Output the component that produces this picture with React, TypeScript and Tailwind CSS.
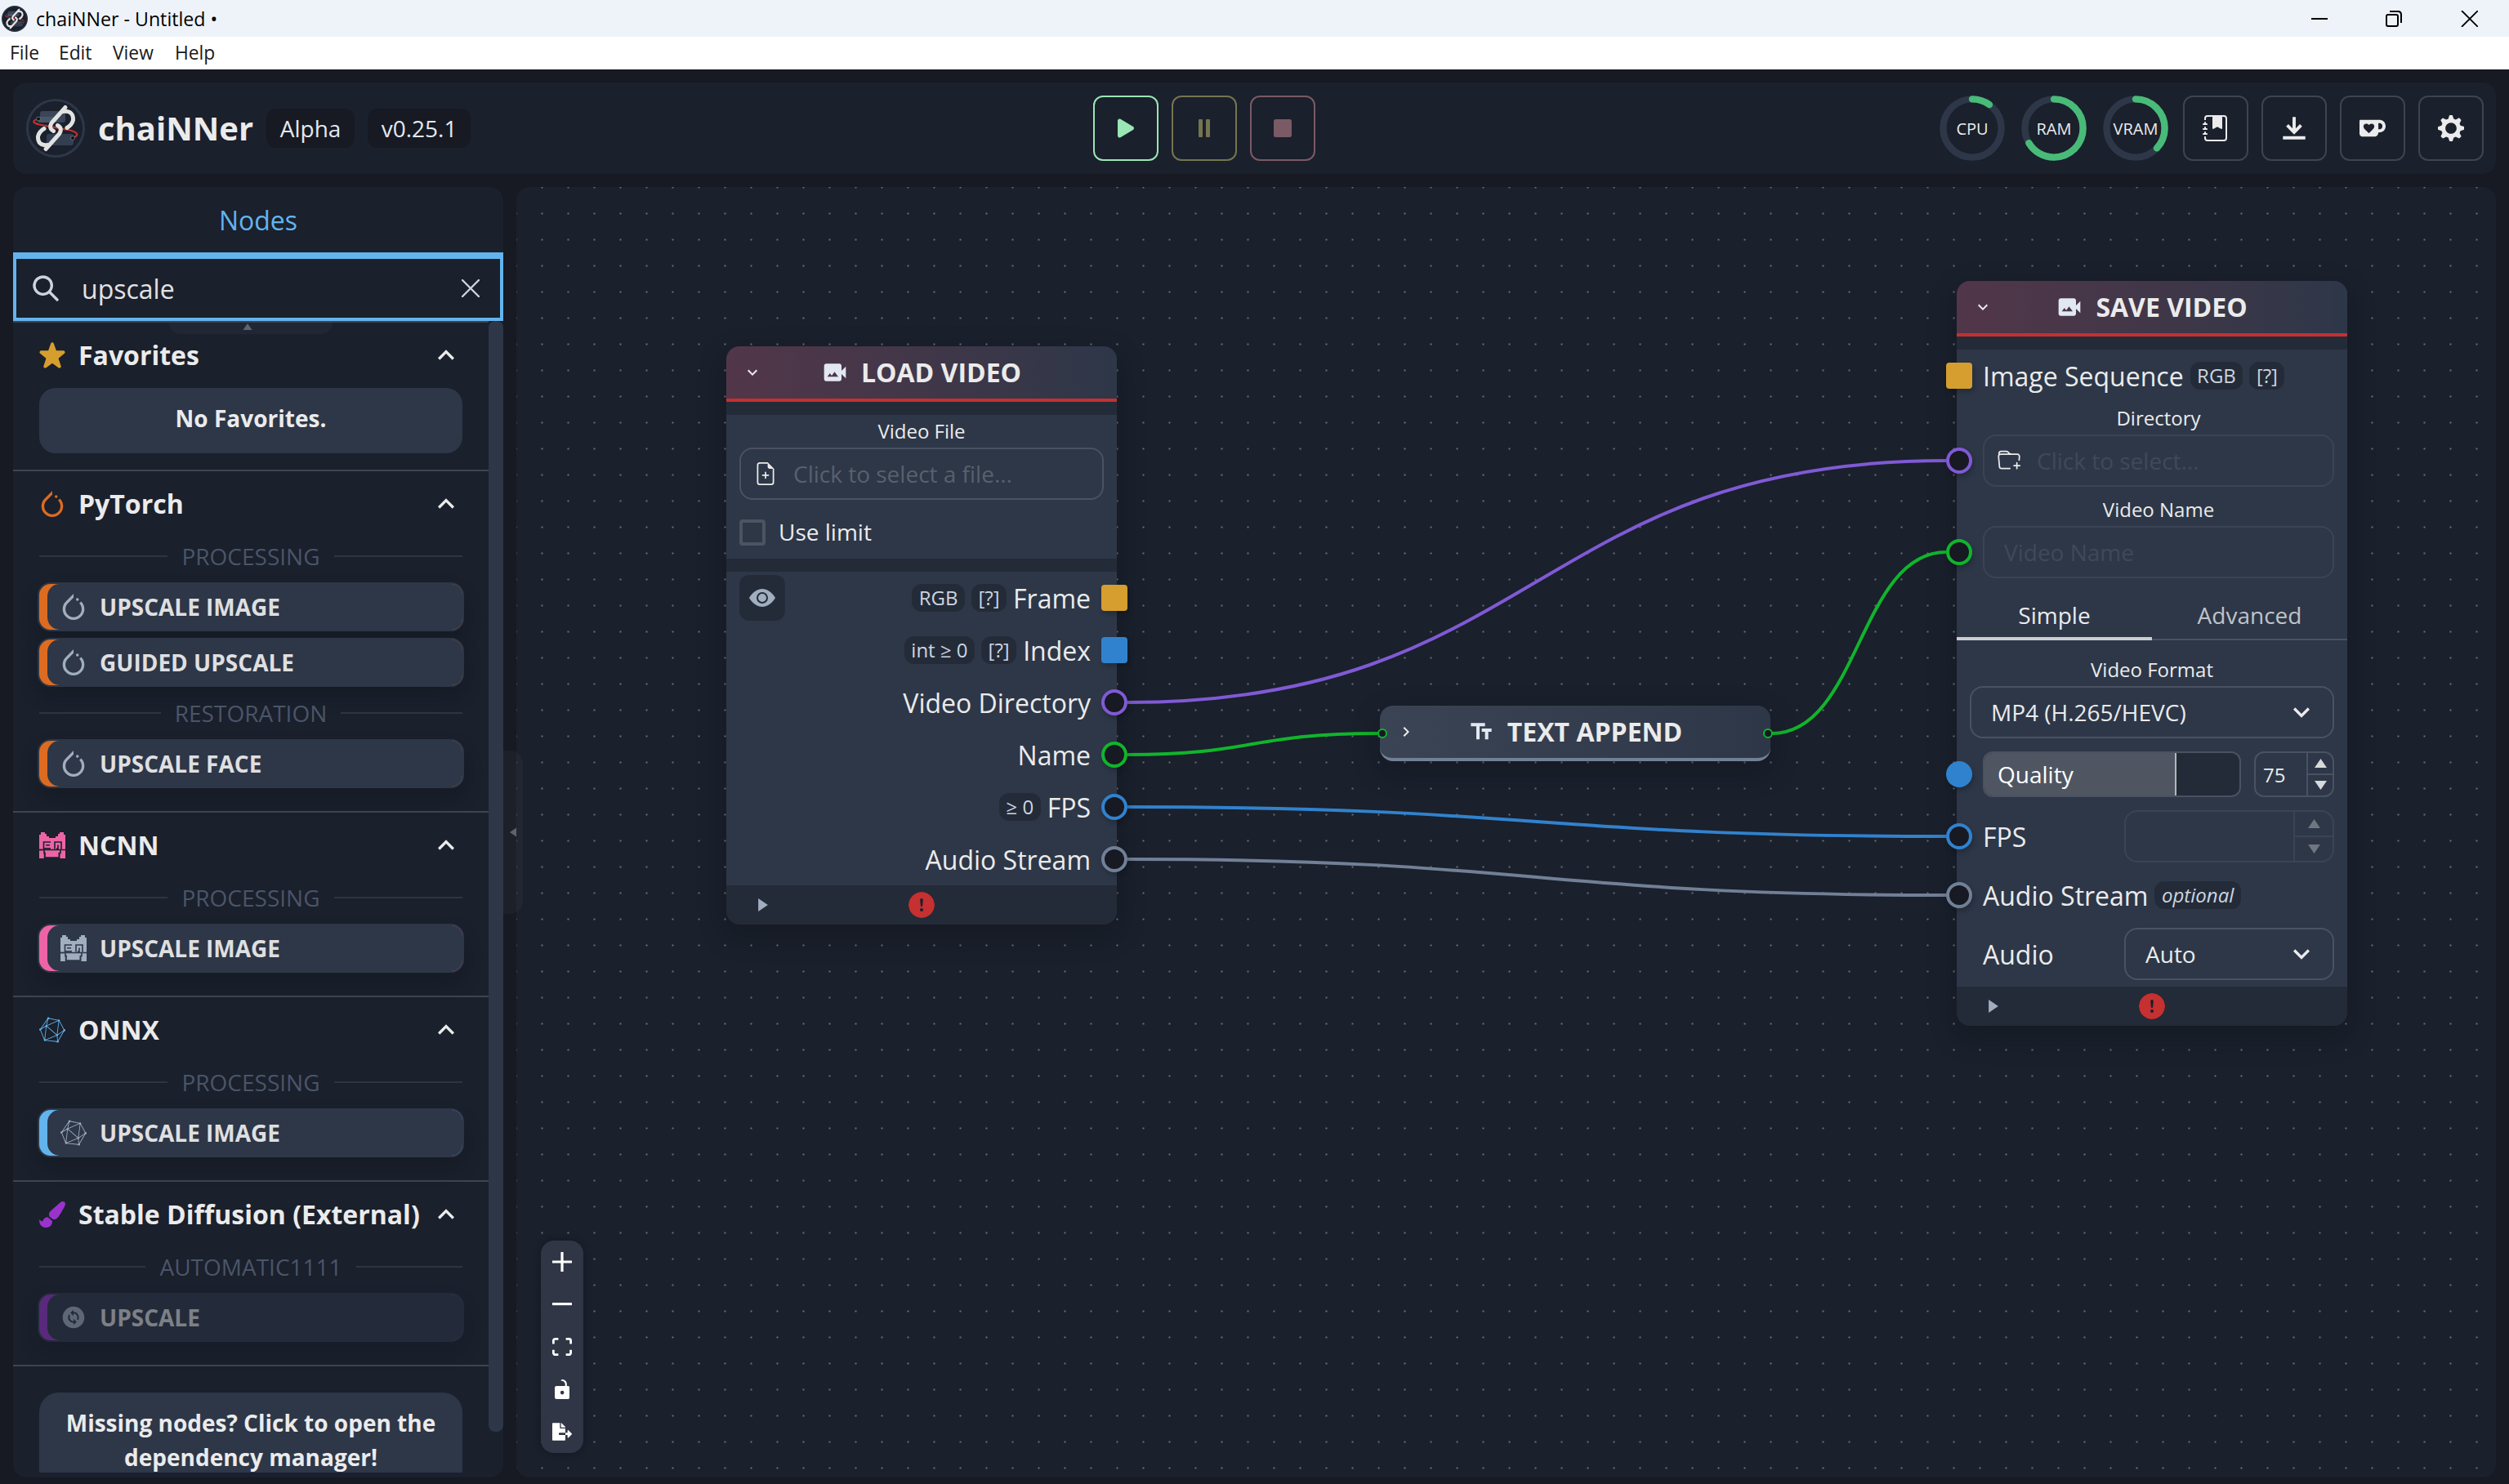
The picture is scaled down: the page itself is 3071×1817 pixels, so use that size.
import React from "react";
import {
  BsExclamationCircleFill,
  BsEyeFill,
  BsFileEarmarkPlus,
  BsFolderPlus,
  BsJournalBookmarkFill,
} from "react-icons/bs";
import { FaFileExport, FaPaintBrush } from "react-icons/fa";
import { IoPause, IoPlay, IoStop } from "react-icons/io5";
import { MdChangeCircle, MdVideoCameraBack } from "react-icons/md";
import { SiKofi, SiOnnx, SiPytorch } from "react-icons/si";

interface NodeItem {
  name: string;
  icon: React.ReactNode;
}

interface Group {
  label: string;
  items: NodeItem[];
}

interface Category {
  title: string;
  icon: React.ReactNode;
  accent: string;
  disabled?: boolean;
  groups: Group[];
}

const Logo = ({ className }: { className?: string }) => (
  <svg viewBox="0 0 72 72" className={className} fill="none">
    <circle cx="36" cy="36" r="34.5" fill="#1a202c" stroke="#2d3748" strokeWidth="3" />
    <rect x="17" y="15" width="31" height="14" rx="3" fill="#3a4558" />
    <rect x="14" y="22" width="24" height="7" rx="3" fill="#4a5568" />
    <rect x="25" y="43" width="33" height="14" rx="3" fill="#333e50" />
    <path d="M15 24.5Q3 28 16 31.500L54 38.500Q69 43 57 48" stroke="#c53030" strokeWidth="2.200" />
    <circle cx="15" cy="24.500" r="2.500" fill="#111" stroke="#718096" strokeWidth="0.800" />
    <circle cx="57" cy="48" r="2.500" fill="#111" stroke="#718096" strokeWidth="0.800" />
    <g stroke="#e2e2e2" strokeWidth="5" strokeLinecap="round">
      <path d="M48 10.500L31.500 29Q27 36 33.500 39.500" />
      <path d="M45 15.500Q58 14 57.500 26Q56 32 50 35.500" />
      <path d="M24 61.500L40.500 43Q45 36 38.500 32.500" />
      <path d="M27 56.500Q14 58 14.500 46Q16 40 22 36.500" />
    </g>
  </svg>
);

const NcnnIcon = ({ cut }: { cut: string }) => (
  <svg viewBox="0 0 32 32" className="size-8">
    <path
      fill="currentColor"
      d="M0 3h2V0h5v2h2v3h3v2h8V5h3V2h2V0h5v3h2v29h-7H0z"
    />
    <path
      stroke={cut}
      strokeWidth="1.6"
      fill="none"
      d="M14 12H5.500v9.500H0M14 19.800H5.500M13 15.800H8M19 20.500V12h8v9.500H5M23 15.500v4.500h-2M6 21v4.500h2M26 21v4.500h-2"
    />
    <path fill={cut} d="M5.800 25h2v7h-2zM23.500 25h2v7h-2zM5.800 30.200h19V32h-19zM0 20.700h4v1.600H0zM28 20.700h4v1.600h-4z" />
  </svg>
);

const Star = () => (
  <svg viewBox="0 0 24 24" className="size-8 text-[#d69e2e]">
    <path
      fill="currentColor"
      d="M23.555,8.729a1.505,1.505,0,0,0-1.406-.98H16.062a.5.5,0,0,1-.472-.334L13.405,1.222a1.5,1.5,0,0,0-2.81,0l-.005.016L8.41,7.415a.5.5,0,0,1-.471.334H1.85A1.5,1.5,0,0,0,.887,10.4l5.184,4.3a.5.5,0,0,1,.155.543L4.048,21.774a1.5,1.5,0,0,0,2.31,1.684l5.346-3.92a.5.5,0,0,1,.591,0l5.344,3.919a1.5,1.5,0,0,0,2.312-1.683l-2.178-6.535a.5.5,0,0,1,.155-.543l5.194-4.306A1.5,1.5,0,0,0,23.555,8.729Z"
    />
  </svg>
);

const Chevron = ({ className }: { className: string }) => (
  <svg viewBox="0 0 24 24" className={className}>
    <path fill="currentColor" d="M16.59 8.59L12 13.17 7.41 8.59 6 10l6 6 6-6z" />
  </svg>
);

const Triangle = ({ className }: { className: string }) => (
  <svg viewBox="0 0 15 11" className={className}>
    <path fill="currentColor" d="M7.500 0L15 11H0z" />
  </svg>
);

const categories: Category[] = [
  {
    title: "PyTorch",
    icon: <SiPytorch className="size-8 text-[#dd6b20]" />,
    accent: "bg-[#dd6b20]",
    groups: [
      {
        label: "PROCESSING",
        items: [
          { name: "UPSCALE IMAGE", icon: <SiPytorch className="size-8" /> },
          { name: "GUIDED UPSCALE", icon: <SiPytorch className="size-8" /> },
        ],
      },
      {
        label: "RESTORATION",
        items: [{ name: "UPSCALE FACE", icon: <SiPytorch className="size-8" /> }],
      },
    ],
  },
  {
    title: "NCNN",
    icon: (
      <span className="text-[#ed64a6]">
        <NcnnIcon cut="#1a202c" />
      </span>
    ),
    accent: "bg-[#ed64a6]",
    groups: [
      { label: "PROCESSING", items: [{ name: "UPSCALE IMAGE", icon: <NcnnIcon cut="#2d3748" /> }] },
    ],
  },
  {
    title: "ONNX",
    icon: <SiOnnx className="size-8 text-[#63b3ed]" />,
    accent: "bg-[#63b3ed]",
    groups: [
      { label: "PROCESSING", items: [{ name: "UPSCALE IMAGE", icon: <SiOnnx className="size-8" /> }] },
    ],
  },
  {
    title: "Stable Diffusion (External)",
    icon: <FaPaintBrush className="size-8 text-[#9933cc]" />,
    accent: "bg-[#9933cc]",
    disabled: true,
    groups: [
      { label: "AUTOMATIC1111", items: [{ name: "UPSCALE", icon: <MdChangeCircle className="size-8" /> }] },
    ],
  },
];

const TitleBar = () => (
  <>
    <div className="flex h-[45px] items-center bg-[#eef3f9] pl-[2px] text-black">
      <Logo className="size-8" />
      <span className="ml-[10px] pt-[2px] text-[23.200px] leading-none">chaiNNer - Untitled •</span>
      <svg viewBox="0 0 204 20" className="mr-[38px] ml-auto h-5 w-[204px]" fill="none" stroke="#000" strokeWidth="2">
        <path d="M0 10h20" />
        <rect x="92" y="5" width="14" height="14" rx="2" />
        <path d="M96 1h10q4 0 4 4v10" />
        <path d="M184 0l20 20M204 0l-20 20" strokeWidth="1.800" />
      </svg>
    </div>
    <div className="flex h-10 items-center bg-white text-[22.800px] leading-none text-[#1a1a1a]">
      <span className="w-[60px] pl-[12px]">File</span>
      <span className="w-[66px] pl-[12px]">Edit</span>
      <span className="w-[76px] pl-[12px]">View</span>
      <span className="pl-[12px]">Help</span>
    </div>
  </>
);

const Meter = ({ label, value }: { label: string; value: number }) => (
  <div className="grid size-20 place-items-center">
    <svg viewBox="0 0 100 100" className="col-start-1 row-start-1 size-20 -rotate-90" fill="none" strokeWidth="10.500">
      <circle cx="50" cy="50" r="44.500" stroke="#2d3748" />
      <circle
        cx="50"
        cy="50"
        r="44.500"
        stroke="#48bb78"
        strokeLinecap="round"
        pathLength="100"
        strokeDasharray={`${value} 100`}
      />
    </svg>
    <span className="col-start-1 row-start-1 pt-px text-[20px] leading-none text-[#ebebeb]">{label}</span>
  </div>
);

const HeaderButton = ({ children }: { children: React.ReactNode }) => (
  <button className="flex size-20 items-center justify-center rounded-xl border-2 border-[#3f444e] text-[#ebebeb]">
    {children}
  </button>
);

const Header = () => (
  <header className="flex h-28 items-center rounded-2xl bg-[#1a202c] pr-[15px] pl-4">
    <div className="flex w-[1306px] items-center gap-4">
      <Logo className="size-[72px]" />
      <h1 className="text-[40px] leading-none font-bold text-[#ebebeb]">chaiNNer</h1>
      <span className="flex h-12 w-[108px] items-center justify-center rounded-xl bg-[#171923] pb-px text-[28px] leading-none text-[#e2e8f0]">
        Alpha
      </span>
      <span className="flex h-12 w-[126px] items-center justify-center rounded-xl bg-[#171923] pb-px text-[28px] leading-none text-[#e2e8f0]">
        v0.25.1
      </span>
    </div>
    <div className="flex gap-4">
      <button className="flex size-20 items-center justify-center rounded-xl border-2 border-[#9ae6b4] text-[#9ae6b4]">
        <IoPlay className="size-8" />
      </button>
      <button className="flex size-20 items-center justify-center rounded-xl border-2 border-[#757550] text-[#757550]">
        <IoPause className="size-8" />
      </button>
      <button className="flex size-20 items-center justify-center rounded-xl border-2 border-[#7a5a64] text-[#7a5a64]">
        <IoStop className="size-8" />
      </button>
    </div>
    <div className="ml-auto flex items-center gap-4">
      <div className="mr-[2px] flex gap-5">
        <Meter label="CPU" value={10} />
        <Meter label="RAM" value={66.5} />
        <Meter label="VRAM" value={37} />
      </div>
      <HeaderButton>
        <BsJournalBookmarkFill className="size-8" />
      </HeaderButton>
      <HeaderButton>
        <svg viewBox="0 0 14 14" className="size-8">
          <path
            fill="currentColor"
            d="M11.2857,6.05714 L10.08571,4.85714 L7.85714,7.14786 L7.85714,1 L6.14286,1 L6.14286,7.14786 L3.91429,4.85714 L2.71429,6.05714 L7,10.42857 L11.2857,6.05714 Z M1,11.2857 L1,13 L13,13 L13,11.2857 L1,11.2857 Z"
          />
        </svg>
      </HeaderButton>
      <HeaderButton>
        <SiKofi className="size-8" />
      </HeaderButton>
      <HeaderButton>
        <svg viewBox="0 0 14 14" className="size-8">
          <path
            fill="currentColor"
            fillRule="evenodd"
            d="M14,7.77 L14,6.17 L12.06,5.53 L11.61,4.44 L12.49,2.6 L11.36,1.47 L9.55,2.38 L8.46,1.93 L7.77,0 L6.17,0 L5.54,1.94 L4.43,2.39 L2.59,1.51 L1.46,2.64 L2.37,4.45 L1.92,5.54 L0,6.23 L0,7.82 L1.94,8.46 L2.39,9.55 L1.51,11.39 L2.64,12.52 L4.45,11.61 L5.54,12.06 L6.23,14 L7.82,14 L8.46,12.06 L9.55,11.61 L11.39,12.49 L12.52,11.36 L11.61,9.55 L12.07,8.46 L14,7.77 Z M7,10 C5.34,10 4,8.66 4,7 C4,5.34 5.34,4 7,4 C8.66,4 10,5.34 10,7 C10,8.66 8.66,10 7,10 Z"
          />
        </svg>
      </HeaderButton>
    </div>
  </header>
);

const SectionTitle = ({ icon, title }: { icon: React.ReactNode; title: string }) => (
  <div className="flex h-20 items-center">
    {icon}
    <span className="ml-4 text-[32px] leading-none font-bold whitespace-nowrap text-[#ebebeb]">{title}</span>
    <Chevron className="ml-auto size-10 shrink-0 rotate-180 text-[#ebebeb]" />
  </div>
);

const NodeButton = ({ item, accent, disabled }: { item: NodeItem; accent: string; disabled?: boolean }) => (
  <div
    className={`-mx-[2px] mb-2 h-[60px] rounded-2xl border-2 border-[#2d3748] shadow-[0_12px_24px_rgba(0,0,0,0.16)] ${accent} ${
      disabled ? "opacity-50" : ""
    }`}
  >
    <div className="ml-[10px] flex h-full items-center rounded-l-[15px] rounded-r-[14px] bg-[#2d3748] pl-4 text-[#a0aec0]">
      {item.icon}
      <span className="ml-4 text-[28px] leading-none font-bold text-[#dfdfe0]">{item.name}</span>
    </div>
  </div>
);

const Sidebar = () => (
  <aside className="flex w-[600px] shrink-0 flex-col overflow-hidden rounded-2xl bg-[#1a202c] pb-[6px]">
    <div className="flex h-[84px] shrink-0 items-center justify-center border-b-4 border-[#63b3ed] pt-px text-[32px] leading-none text-[#63b3ed]">
      Nodes
    </div>
    <div className="flex h-20 shrink-0 items-center border-4 border-[#63b3ed] pr-[25px] pl-[20px]">
      <svg viewBox="0 0 24 24" className="size-8 text-[#cbd5e0]">
        <path
          fill="currentColor"
          d="M23.384,21.619,16.855,15.09a9.284,9.284,0,1,0-1.768,1.768l6.529,6.529a1.266,1.266,0,0,0,1.768,0A1.251,1.251,0,0,0,23.384,21.619ZM2.75,9.5a6.75,6.75,0,1,1,6.75,6.75A6.758,6.758,0,0,1,2.75,9.5Z"
        />
      </svg>
      <span className="ml-[28px] pt-[2px] text-[32px] leading-none text-[#e2e2e3]">upscale</span>
      <svg viewBox="0 0 22 22" className="ml-auto size-[22px]" stroke="#cbd5e0" strokeWidth="2.400" strokeLinecap="round">
        <path d="M1 1l20 20M21 1L1 21" />
      </svg>
    </div>
    <div className="relative flex min-h-0 flex-1 overflow-hidden">
      <div className="w-[582px] border-t-2 border-[#3f444e]">
        <section className="h-[182px] border-b-2 border-[#3f444e] px-8">
          <SectionTitle icon={<Star />} title="Favorites" />
          <div className="h-20 rounded-[20px] bg-[#2d3748] pt-4 text-center text-[28px] leading-[42px] font-bold text-[#ebebeb]">
            No Favorites.
          </div>
        </section>
        {categories.map((category) => (
          <section key={category.title} className="border-b-2 border-[#3f444e] px-8 pb-5">
            <SectionTitle icon={category.icon} title={category.title} />
            {category.groups.map((group) => (
              <div key={group.label}>
                <div className="mb-2 flex h-12 items-center gap-[17px]">
                  <hr className="flex-1 border-t-2 border-[#2f3540]" />
                  <span className="text-[28px] leading-none text-[#4a5568]">{group.label}</span>
                  <hr className="flex-1 border-t-2 border-[#2f3540]" />
                </div>
                {group.items.map((item) => (
                  <NodeButton key={item.name} item={item} accent={category.accent} disabled={category.disabled} />
                ))}
              </div>
            ))}
          </section>
        ))}
        <div className="mx-8 mt-8 h-[120px] rounded-3xl bg-[#2d3748] px-4 pt-4 text-center text-[28px] leading-[42px] font-bold text-[#ebebeb]">
          Missing nodes? Click to open the dependency manager!
        </div>
      </div>
      <div className="h-[1360px] w-[18px] rounded-lg bg-[#2d3748]" />
      <div className="absolute top-[2px] left-[191px] flex h-[14px] w-[200px] justify-center rounded-b-2xl bg-[#202633]">
        <Triangle className="mt-px ml-[-9px] h-[8px] w-[12px] text-[#5f646d]" />
      </div>
    </div>
  </aside>
);

const handleColors = {
  purple: "border-[#805ad5]",
  green: "border-[#10b52c]",
  blue: "border-[#3182ce]",
  gray: "border-[#718096]",
};

type HandleKind = keyof typeof handleColors | "imageList" | "numberList" | "number";

const Handle = ({ kind, side }: { kind: HandleKind; side: string }) => {
  const base = `absolute top-1/2 size-8 -translate-y-1/2 shadow-[2px_4px_6px_rgba(0,0,0,0.2)] ${side}`;
  if (kind === "imageList") return <div className={`${base} rounded-[4px] bg-[#d69e2e]`} />;
  if (kind === "numberList") return <div className={`${base} rounded-[4px] bg-[#3182ce]`} />;
  if (kind === "number") return <div className={`${base} rounded-full bg-[#3182ce]`} />;
  return <div className={`${base} rounded-full border-4 bg-[#171923] ${handleColors[kind]}`} />;
};

const Tag = ({ children, italic }: { children: React.ReactNode; italic?: boolean }) => (
  <span
    className={`flex h-[34px] items-center rounded-xl bg-[#242b38] px-[8.500px] text-[24px] leading-none text-[#cbd5e0] ${
      italic ? "italic" : ""
    }`}
  >
    {children}
  </span>
);

const NodeHeader = ({ title }: { title: string }) => (
  <div className="flex h-[68px] items-center rounded-t-2xl border-b-4 border-[#c53030] bg-linear-to-r from-[#523649] to-[#2d3748]">
    <Chevron className="-mr-[44px] ml-[20px] size-6 text-[#ebebeb]" />
    <div className="flex flex-1 items-center justify-center gap-4">
      <MdVideoCameraBack className="size-8 text-[#e2e8f0]" />
      <span className="text-[32px] leading-none font-bold text-[#ebebeb]">{title}</span>
    </div>
  </div>
);

const NodeFooter = () => (
  <div className="flex h-12 items-center rounded-b-2xl bg-[#242b38]">
    <Triangle className="-mr-[53px] ml-[37px] h-[12px] w-[16px] rotate-90 text-[#a0aec0]" />
    <div className="flex flex-1 justify-center">
      <BsExclamationCircleFill className="size-8 rounded-full bg-[#1a202c] text-[#c53030]" />
    </div>
  </div>
);

const outputs: { label: string; kind: HandleKind; tags: string[] }[] = [
  { label: "Frame", kind: "imageList", tags: ["RGB", "[?]"] },
  { label: "Index", kind: "numberList", tags: ["int ≥ 0", "[?]"] },
  { label: "Video Directory", kind: "purple", tags: [] },
  { label: "Name", kind: "green", tags: [] },
  { label: "FPS", kind: "blue", tags: ["≥ 0"] },
  { label: "Audio Stream", kind: "gray", tags: [] },
];

const LoadVideoNode = () => (
  <div className="absolute top-[195px] left-[257px] w-[478px] rounded-2xl shadow-[0_12px_36px_rgba(0,0,0,0.22)]">
    <NodeHeader title="LOAD VIDEO" />
    <div className="h-4 bg-[#242b38]" />
    <div className="h-[176px] bg-[#2d3748] px-4">
      <div className="flex h-10 items-center justify-center text-[24px] leading-none text-[#ebebeb]">Video File</div>
      <div className="flex h-16 items-center rounded-2xl border-2 border-[#4a5261] pl-[16px]">
        <BsFileEarmarkPlus className="size-7 text-[#ebebeb]" />
        <span className="ml-[20px] text-[28px] leading-none text-[#59606c]">Click to select a file...</span>
      </div>
      <div className="mt-2 flex h-16 items-center">
        <div className="size-8 rounded-[4px] border-4 border-[#4b5460]" />
        <span className="ml-4 pb-[2px] text-[28px] leading-none text-[#ebebeb]">Use limit</span>
      </div>
    </div>
    <div className="h-4 bg-[#242b38]" />
    <div className="bg-[#2d3748]">
      {outputs.map((output, i) => (
        <div key={output.label} className="relative flex h-16 items-center justify-end gap-2 pr-8 pl-4">
          {i === 0 && (
            <div className="mr-auto flex size-14 items-center justify-center rounded-xl bg-[#242b38]">
              <BsEyeFill className="size-8 text-[#a0aec0]" />
            </div>
          )}
          {output.tags.map((tag) => (
            <Tag key={tag}>{tag}</Tag>
          ))}
          <span className="pt-px text-[32px] leading-none text-[#ebebeb]">{output.label}</span>
          <Handle kind={output.kind} side="-right-[13px]" />
        </div>
      ))}
    </div>
    <NodeFooter />
  </div>
);

const TextAppendNode = () => (
  <div className="absolute top-[635px] left-[1057px] w-[478px]">
    <div className="flex h-[68px] items-center rounded-2xl border-b-4 border-[#718096] bg-linear-to-r from-[#3b4455] to-[#2d3748] shadow-[0_12px_36px_rgba(0,0,0,0.22)]">
      <Chevron className="-mr-[44px] ml-[20px] size-6 -rotate-90 text-[#ebebeb]" />
      <div className="flex flex-1 items-center justify-center gap-4">
        <svg viewBox="0 0 24 24" className="size-8 text-[#e2e8f0]">
          <path fill="currentColor" d="M2.500 4v3h5v12h3V7h5V4h-13zm19 5h-9v3h3v7h3v-7h3V9z" />
        </svg>
        <span className="text-[32px] leading-none font-bold text-[#ebebeb]">TEXT APPEND</span>
      </div>
    </div>
    <div className="absolute top-[28px] -left-[3px] size-3 rounded-full border-2 border-[#10b52c] bg-[#171923]" />
    <div className="absolute top-[28px] -right-[3px] size-3 rounded-full border-2 border-[#10b52c] bg-[#171923]" />
  </div>
);

const SaveVideoNode = () => (
  <div className="absolute top-[115px] left-[1763px] w-[478px] rounded-2xl text-[#ebebeb] shadow-[0_12px_36px_rgba(0,0,0,0.22)]">
    <NodeHeader title="SAVE VIDEO" />
    <div className="h-4 bg-[#242b38]" />
    <div className="bg-[#2d3748] pb-2">
      <div className="relative flex h-16 items-center gap-2 pl-8">
        <Handle kind="imageList" side="-left-[13px]" />
        <span className="pt-px text-[32px] leading-none">Image Sequence</span>
        <Tag>RGB</Tag>
        <Tag>[?]</Tag>
      </div>

      <div className="pr-4 pl-8">
        <div className="flex h-10 items-center justify-center text-[24px] leading-none">Directory</div>
      </div>
      <div className="relative pr-4 pl-8">
        <Handle kind="purple" side="-left-[13px]" />
        <div className="flex h-16 items-center rounded-2xl border-2 border-[#3b4454] pl-[16px]">
          <BsFolderPlus className="size-7" />
          <span className="ml-[20px] text-[28px] leading-none text-[#404959]">Click to select...</span>
        </div>
      </div>
      <div className="mt-2 flex h-10 items-center justify-center pr-4 pl-8 text-[24px] leading-none">Video Name</div>
      <div className="relative pr-4 pl-8">
        <Handle kind="green" side="-left-[13px]" />
        <div className="flex h-16 items-center rounded-2xl border-2 border-[#3b4454] pl-6 text-[28px] leading-none text-[#404959]">
          Video Name
        </div>
      </div>

      <div className="mt-3 flex h-16 text-[28px] leading-none">
        <div className="flex flex-1 items-center justify-center border-b-4 border-[#cbcdd1] pt-[6px]">Simple</div>
        <div className="flex flex-1 items-center justify-center border-b-2 border-[#4a5261] pt-1 text-[#c0c3c8]">
          Advanced
        </div>
      </div>

      <div className="mt-4 px-4">
        <div className="flex h-10 items-center justify-center text-[24px] leading-none">Video Format</div>
        <div className="flex h-16 items-center justify-between rounded-2xl border-2 border-[#4a5261] pr-[18px] pl-6 text-[28px] leading-none">
          MP4 (H.265/HEVC)
          <Chevron className="size-10" />
        </div>
      </div>

      <div className="relative mt-4 flex h-14 gap-4 pr-4 pl-8">
        <Handle kind="number" side="-left-[13px]" />
        <div className="flex w-[316px] overflow-hidden rounded-xl border-2 border-[#4a5261] bg-[#242b38]">
          <div className="flex w-[235px] items-center border-r-2 border-[#b3b6bb] bg-[#4f5662] pl-4 text-[28px] leading-none text-white">
            Quality
          </div>
        </div>
        <div className="flex flex-1 items-center rounded-xl border-2 border-[#4a5261] text-[24px] leading-none">
          <span className="flex-1 pt-px pl-[9px]">75</span>
          <div className="flex h-full w-8 flex-col border-l-2 border-[#4a5261] text-[#d8d9db]">
            <div className="flex flex-1 items-center justify-center border-b-2 border-[#4a5261]">
              <Triangle className="h-[11px] w-[15px]" />
            </div>
            <div className="flex flex-1 items-center justify-center">
              <Triangle className="h-[11px] w-[15px] rotate-180" />
            </div>
          </div>
        </div>
      </div>

      <div className="relative mt-4 flex h-16 items-center justify-between pr-4 pl-8">
        <Handle kind="blue" side="-left-[13px]" />
        <span className="pt-px text-[32px] leading-none">FPS</span>
        <div className="flex h-16 w-[257px] justify-end rounded-2xl border-2 border-[#3b4454]">
          <div className="flex w-12 flex-col border-l-2 border-[#3b4454] text-[#70757f]">
            <div className="flex flex-1 items-center justify-center border-b-2 border-[#3b4454]">
              <Triangle className="h-[11px] w-[15px]" />
            </div>
            <div className="flex flex-1 items-center justify-center">
              <Triangle className="h-[11px] w-[15px] rotate-180" />
            </div>
          </div>
        </div>
      </div>

      <div className="relative mt-2 flex h-16 items-center gap-2 pl-8">
        <Handle kind="gray" side="-left-[13px]" />
        <span className="pt-px text-[32px] leading-none">Audio Stream</span>
        <Tag italic>optional</Tag>
      </div>

      <div className="mt-2 flex h-16 items-center justify-between pr-4 pl-8">
        <span className="pt-px text-[32px] leading-none">Audio</span>
        <div className="flex h-16 w-[257px] items-center justify-between rounded-2xl border-2 border-[#4a5261] pr-[18px] pl-6 text-[28px] leading-none">
          Auto
          <Chevron className="size-10" />
        </div>
      </div>
    </div>
    <NodeFooter />
  </div>
);

// Connections between handles, in window coordinates
const edges = [
  { from: [1380, 860], to: [2382, 564], color: "#805ad5" },
  { from: [1380, 924], to: [1686, 898], color: "#10b52c" },
  { from: [2169, 898], to: [2382, 676], color: "#10b52c" },
  { from: [1380, 988], to: [2382, 1024], color: "#3182ce" },
  { from: [1380, 1052], to: [2382, 1096], color: "#718096" },
];

const Edges = () => (
  <svg viewBox="632 229 2423 1580" className="absolute inset-0 h-[1580px] w-[2423px]" fill="none" strokeWidth="4">
    {edges.map(({ from: [x1, y1], to: [x2, y2], color }) => {
      const mid = (x1 + x2) / 2;
      return <path key={`${x1}-${y1}`} d={`M${x1} ${y1}C${mid} ${y1} ${mid} ${y2} ${x2} ${y2}`} stroke={color} />;
    })}
  </svg>
);

const Controls = () => (
  <div className="absolute top-[1290px] left-[30px] grid h-[260px] w-[52px] grid-rows-5 place-items-center rounded-2xl bg-[#313848]/95 text-white shadow-[0_0_8px_rgba(0,0,0,0.25)]">
    <svg viewBox="0 0 32 32" className="size-6" fill="currentColor">
      <path d="M32 18.133H18.133V32h-4.266V18.133H0v-4.266h13.867V0h4.266v13.867H32z" />
    </svg>
    <svg viewBox="0 0 32 5" className="w-6" fill="currentColor">
      <path d="M0 0h32v4.200H0z" />
    </svg>
    <svg viewBox="0 0 32 30" className="w-6" fill="currentColor">
      <path d="M3.692 4.63c0-.53.4-.938.939-.938h5.215V0H4.708C2.13 0 0 2.054 0 4.63v5.216h3.692V4.631zM27.354 0h-5.2v3.692h5.17c.53 0 .984.4.984.939v5.215H32V4.631A4.624 4.624 0 0027.354 0zm.954 24.83c0 .532-.4.94-.939.94h-5.215v3.768h5.215c2.577 0 4.631-2.13 4.631-4.707v-5.139h-3.692v5.139zm-23.677.94c-.531 0-.939-.4-.939-.94v-5.138H0v5.139c0 2.577 2.13 4.707 4.708 4.707h5.138V25.77H4.631z" />
    </svg>
    <svg viewBox="0 0 25 32" className="h-6" fill="currentColor">
      <path d="M21.333 10.667H19.81V7.619C19.81 3.429 16.38 0 12.19 0c-4.114 1.828-1.37 2.133.305 2.438 1.676.305 4.42 2.59 4.42 5.181v3.048H3.047A3.056 3.056 0 000 13.714v15.238A3.056 3.056 0 003.048 32h18.285a3.056 3.056 0 003.048-3.048V13.714a3.056 3.056 0 00-3.048-3.047zM12.19 24.533a3.056 3.056 0 01-3.047-3.047 3.056 3.056 0 013.047-3.048 3.056 3.056 0 013.048 3.048 3.056 3.056 0 01-3.048 3.047z" />
    </svg>
    <FaFileExport className="size-6" />
  </div>
);

const Canvas = () => (
  <main className="relative flex-1 rounded-2xl bg-[#1a202c] bg-[radial-gradient(circle,#6a6e77_0.7px,transparent_1.500px)] bg-[length:32px_32px] bg-[position:-16.500px_-15.500px]">
    <Edges />
    <LoadVideoNode />
    <TextAppendNode />
    <SaveVideoNode />
    <Controls />
    <div className="absolute top-[690px] -left-4 flex h-[200px] w-6 items-center rounded-r-2xl bg-white/3">
      <Triangle className="ml-[5px] h-[8px] w-[14px] -rotate-90 text-[#606269]" />
    </div>
  </main>
);

const App: React.FC = () => {
  return (
    <div className="flex h-[1817px] w-[3071px] flex-col overflow-hidden bg-[#171923] font-['Open_Sans',sans-serif]">
      <TitleBar />
      <div className="flex min-h-0 flex-1 flex-col gap-4 px-4 pt-4 pb-2">
        <Header />
        <div className="flex min-h-0 flex-1 gap-4">
          <Sidebar />
          <Canvas />
        </div>
      </div>
    </div>
  );
};

export default App;
